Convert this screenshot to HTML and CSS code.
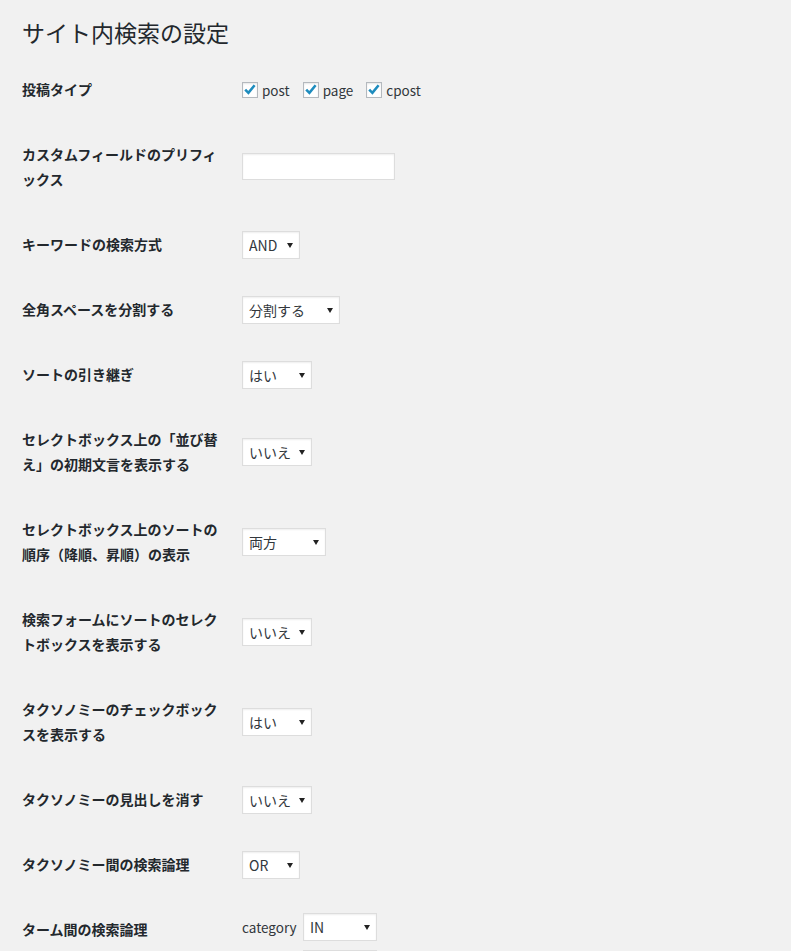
FILE: index.html
```html
<!DOCTYPE html>
<html lang="ja">
<head>
<meta charset="utf-8">
<title>サイト内検索の設定</title>
<link rel="stylesheet" href="styles.css">
</head>
<body>
<div class="wrap">
  <h1 class="title">サイト内検索の設定</h1>
  <div class="form">
    <div class="row">
      <div class="th">投稿タイプ</div>
      <div class="td">
        <div class="checks">
          <label class="check"><span class="cb"><svg viewBox="0 0 16 16" width="16" height="16"><path d="M3.2 7.6 L6.4 10.8 L12.6 3.2" fill="none" stroke="#1e8cbe" stroke-width="2.6" stroke-linecap="butt" stroke-linejoin="miter"/></svg></span>post</label>
          <label class="check"><span class="cb"><svg viewBox="0 0 16 16" width="16" height="16"><path d="M3.2 7.6 L6.4 10.8 L12.6 3.2" fill="none" stroke="#1e8cbe" stroke-width="2.6" stroke-linecap="butt" stroke-linejoin="miter"/></svg></span>page</label>
          <label class="check"><span class="cb"><svg viewBox="0 0 16 16" width="16" height="16"><path d="M3.2 7.6 L6.4 10.8 L12.6 3.2" fill="none" stroke="#1e8cbe" stroke-width="2.6" stroke-linecap="butt" stroke-linejoin="miter"/></svg></span>cpost</label>
        </div>
      </div>
    </div>
    <div class="row">
      <div class="th">カスタムフィールドのプリフィックス</div>
      <div class="td"><input class="text" type="text" value=""></div>
    </div>
    <div class="row">
      <div class="th">キーワードの検索方式</div>
      <div class="td"><span class="sel"><select class="w58"><option>AND</option><option>OR</option></select></span></div>
    </div>
    <div class="row">
      <div class="th">全角スペースを分割する</div>
      <div class="td"><span class="sel"><select class="w98"><option>分割する</option><option>分割しない</option></select></span></div>
    </div>
    <div class="row">
      <div class="th">ソートの引き継ぎ</div>
      <div class="td"><span class="sel"><select class="w70"><option>はい</option><option>いいえ</option></select></span></div>
    </div>
    <div class="row">
      <div class="th">セレクトボックス上の「並び替え」の初期文言を表示する</div>
      <div class="td"><span class="sel"><select class="w70"><option>いいえ</option><option>はい</option></select></span></div>
    </div>
    <div class="row">
      <div class="th">セレクトボックス上のソートの順序（降順、昇順）の表示</div>
      <div class="td"><span class="sel"><select class="w84"><option>両方</option><option>降順のみ</option><option>昇順のみ</option></select></span></div>
    </div>
    <div class="row">
      <div class="th">検索フォームにソートのセレクトボックスを表示する</div>
      <div class="td"><span class="sel"><select class="w70"><option>いいえ</option><option>はい</option></select></span></div>
    </div>
    <div class="row">
      <div class="th">タクソノミーのチェックボックスを表示する</div>
      <div class="td"><span class="sel"><select class="w70"><option>はい</option><option>いいえ</option></select></span></div>
    </div>
    <div class="row">
      <div class="th">タクソノミーの見出しを消す</div>
      <div class="td"><span class="sel"><select class="w70"><option>いいえ</option><option>はい</option></select></span></div>
    </div>
    <div class="row">
      <div class="th">タクソノミー間の検索論理</div>
      <div class="td"><span class="sel"><select class="w58"><option>OR</option><option>AND</option></select></span></div>
    </div>
    <div class="row">
      <div class="th">ターム間の検索論理</div>
      <div class="td td-top">
        <div class="terms">
          <div class="term"><span class="term-name">category</span><span class="sel"><select class="w74"><option>IN</option><option>NOT IN</option><option>AND</option></select></span></div>
          <div class="term"><span class="term-name">post_tag</span><span class="sel"><select class="w74"><option>IN</option><option>NOT IN</option><option>AND</option></select></span></div>
        </div>
      </div>
    </div>
  </div>
</div>
</body>
</html>
```

FILE: styles.css
```css
html, body {
  margin: 0;
  padding: 0;
  background: #f1f1f1;
}

body {
  font-family: "Noto Sans CJK JP", "Noto Sans", sans-serif;
  font-size: 14px;
  color: #23282d;
}

.wrap {
  padding: 17px 0 0 22px;
}

.title {
  margin: 0 0 10px;
  font-size: 23px;
  font-weight: 400;
  line-height: 30px;
  color: #23282d;
}

.row {
  display: grid;
  grid-template-columns: 210px 1fr;
}

.th {
  width: 200px;
  padding: 20px 10px 20px 0;
  font-weight: 700;
  line-height: 25px;
  font-size: 14px;
}

.td {
  padding: 15px 10px;
  align-self: center;
}

.td-top {
  align-self: start;
  padding-top: 16px;
}

.checks {
  display: flex;
  align-items: center;
  gap: 13px;
  color: #32373c;
  font-size: 13.5px;
}

.check {
  display: inline-flex;
  align-items: center;
  gap: 4px;
  line-height: 20px;
}

.cb {
  display: inline-block;
  width: 14px;
  height: 14px;
  border: 1px solid #b4b9be;
  background: #fff;
  box-shadow: inset 0 1px 2px rgba(0, 0, 0, 0.1);
  position: relative;
}

.cb svg {
  position: absolute;
  left: -1px;
  top: -1px;
}

.text {
  box-sizing: border-box;
  width: 153px;
  height: 27px;
  margin: -1px 0 0;
  border: 1px solid #ddd;
  box-shadow: inset 0 1px 2px rgba(0, 0, 0, 0.07);
  background: #fff;
  display: block;
}

.sel {
  position: relative;
  display: inline-block;
  vertical-align: middle;
}

.sel::after {
  content: "";
  position: absolute;
  right: 7px;
  top: 12px;
  border-left: 3px solid transparent;
  border-right: 3px solid transparent;
  border-top: 5px solid #222;
  pointer-events: none;
}

.sel select {
  -webkit-appearance: none;
  appearance: none;
  box-sizing: border-box;
  height: 28px;
  margin: 0;
  padding: 0 20px 0 6px;
  border: 1px solid #ddd;
  border-radius: 0;
  box-shadow: inset 0 1px 2px rgba(0, 0, 0, 0.07);
  background: #fff;
  color: #32373c;
  font-family: "Noto Sans CJK JP", "Noto Sans", sans-serif;
  font-size: 14px;
  line-height: 26px;
  display: block;
}

.w58 { width: 58px; }
.w70 { width: 70px; }
.w74 { width: 74px; }
.w84 { width: 84px; }
.w98 { width: 98px; }

.terms {
  display: flex;
  flex-direction: column;
  gap: 9px;
}

.term {
  display: flex;
  align-items: center;
  gap: 8px;
}

.term-name {
  color: #32373c;
  font-size: 13.5px;
  width: 53px;
}
```
